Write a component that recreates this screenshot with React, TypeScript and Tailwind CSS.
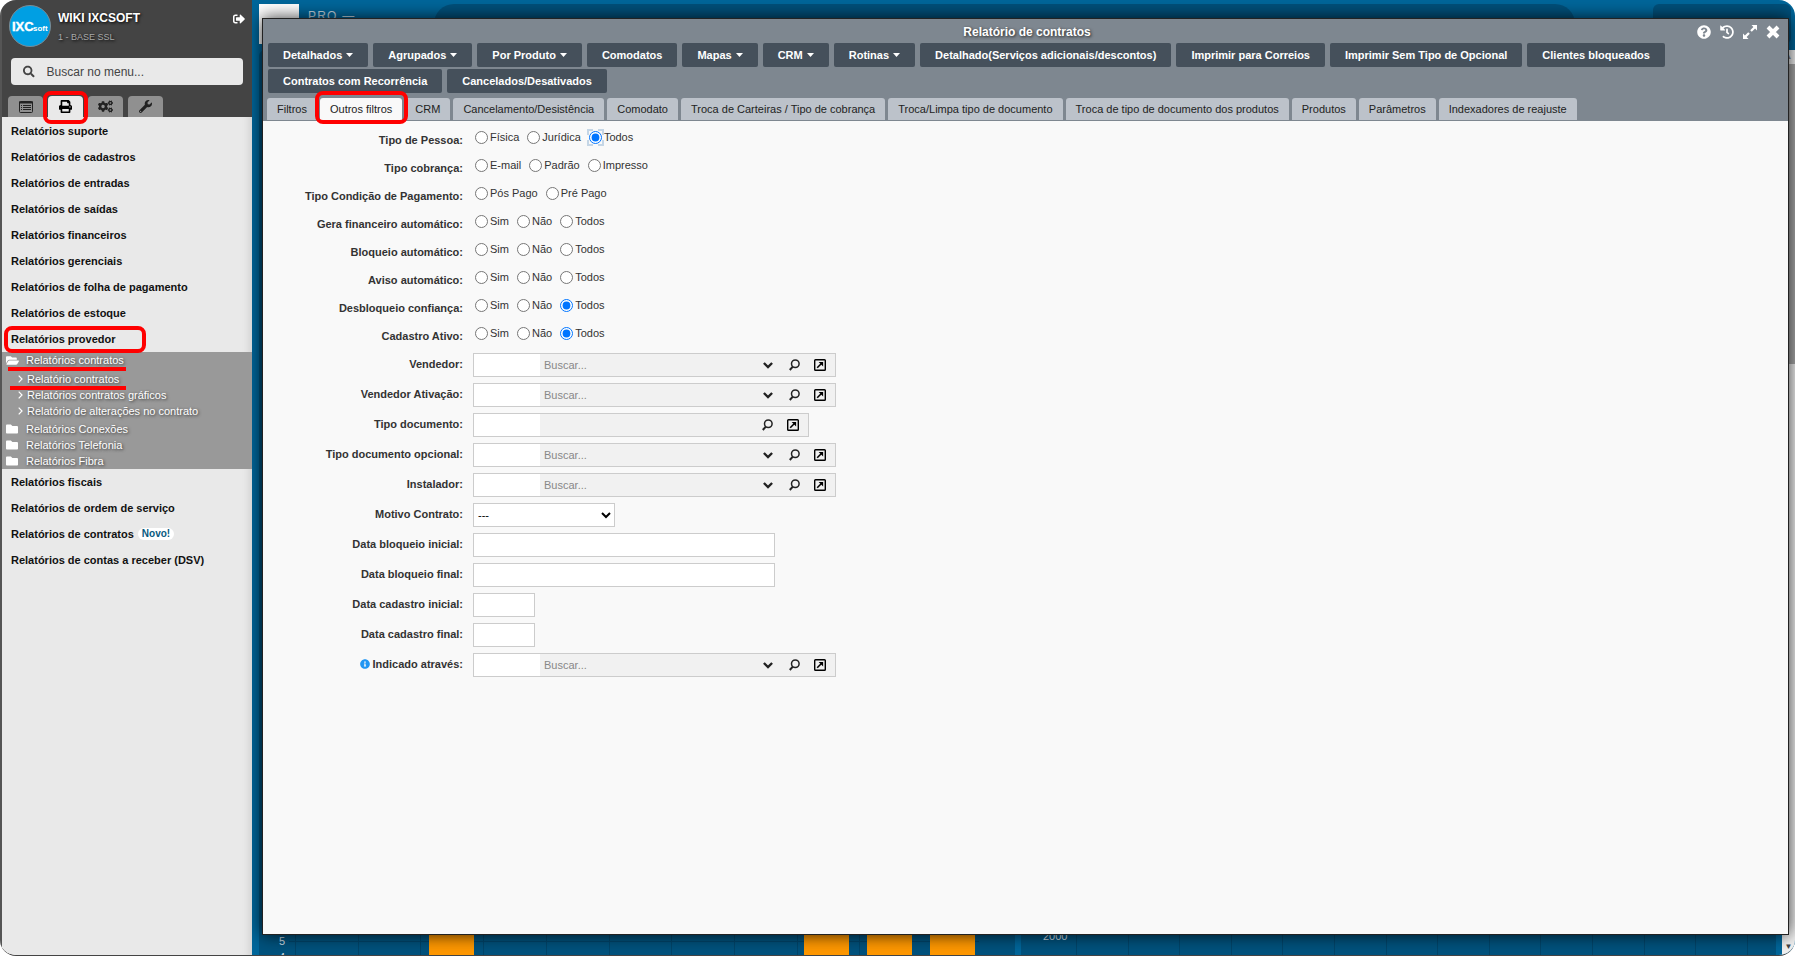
import { ReactNode } from 'react'
import {
  FaCogs,
  FaFolder,
  FaFolderOpen,
  FaHistory,
  FaInfoCircle,
  FaPrint,
  FaQuestionCircle,
  FaSearch,
  FaSignOutAlt,
  FaTimes,
  FaWrench,
} from 'react-icons/fa'

interface RadioField {
  label: string
  name: string
  options: string[]
  checked?: string
}

interface LookupField {
  label: string
  name: string
  searchable: boolean
  info?: boolean
}

const menuTop = [
  'Relatórios suporte',
  'Relatórios de cadastros',
  'Relatórios de entradas',
  'Relatórios de saídas',
  'Relatórios financeiros',
  'Relatórios gerenciais',
  'Relatórios de folha de pagamento',
  'Relatórios de estoque',
]

const contractReports = [
  'Relatório contratos',
  'Relatórios contratos gráficos',
  'Relatório de alterações no contrato',
]

const folders = ['Relatórios Conexões', 'Relatórios Telefonia', 'Relatórios Fibra']

const actions = [
  { label: 'Detalhados', menu: true },
  { label: 'Agrupados', menu: true },
  { label: 'Por Produto', menu: true },
  { label: 'Comodatos', menu: false },
  { label: 'Mapas', menu: true },
  { label: 'CRM', menu: true },
  { label: 'Rotinas', menu: true },
  { label: 'Detalhado(Serviços adicionais/descontos)', menu: false },
  { label: 'Imprimir para Correios', menu: false },
  { label: 'Imprimir Sem Tipo de Opcional', menu: false },
  { label: 'Clientes bloqueados', menu: false },
  { label: 'Contratos com Recorrência', menu: false },
  { label: 'Cancelados/Desativados', menu: false },
]

const tabs = [
  'Filtros',
  'Outros filtros',
  'CRM',
  'Cancelamento/Desistência',
  'Comodato',
  'Troca de Carteiras / Tipo de cobrança',
  'Troca/Limpa tipo de documento',
  'Troca de tipo de documento dos produtos',
  'Produtos',
  'Parâmetros',
  'Indexadores de reajuste',
]

const yesNoAll = ['Sim', 'Não', 'Todos']

const radioFields: RadioField[] = [
  { label: 'Tipo de Pessoa', name: 'tipo_pessoa', options: ['Física', 'Jurídica', 'Todos'], checked: 'Todos' },
  { label: 'Tipo cobrança', name: 'tipo_cobranca', options: ['E-mail', 'Padrão', 'Impresso'] },
  { label: 'Tipo Condição de Pagamento', name: 'tipo_condicao', options: ['Pós Pago', 'Pré Pago'] },
  { label: 'Gera financeiro automático', name: 'gera_financeiro', options: yesNoAll },
  { label: 'Bloqueio automático', name: 'bloqueio', options: yesNoAll },
  { label: 'Aviso automático', name: 'aviso', options: yesNoAll },
  { label: 'Desbloqueio confiança', name: 'desbloqueio', options: yesNoAll, checked: 'Todos' },
  { label: 'Cadastro Ativo', name: 'cadastro_ativo', options: yesNoAll, checked: 'Todos' },
]

const lookups: LookupField[] = [
  { label: 'Vendedor', name: 'vendedor', searchable: true },
  { label: 'Vendedor Ativação', name: 'vendedor_ativacao', searchable: true },
  { label: 'Tipo documento', name: 'tipo_documento', searchable: false },
  { label: 'Tipo documento opcional', name: 'tipo_documento_opcional', searchable: true },
  { label: 'Instalador', name: 'instalador', searchable: true },
]

const dates = [
  { label: 'Data bloqueio inicial', name: 'bloqueio_inicial', wide: true },
  { label: 'Data bloqueio final', name: 'bloqueio_final', wide: true },
  { label: 'Data cadastro inicial', name: 'cadastro_inicial', wide: false },
  { label: 'Data cadastro final', name: 'cadastro_final', wide: false },
]

function ListIcon() {
  return (
    <svg width="14" height="12" viewBox="0 0 14 12" fill="none" stroke="currentColor">
      <rect x="0.5" y="0.5" width="13" height="11" rx="1" />
      <path d="M0 1.5h14" strokeWidth="2" />
      <path d="M2 4.5h1M4 4.5h8M2 6.5h1M4 6.5h8M2 8.5h1M4 8.5h8" />
    </svg>
  )
}

function ResizeIcon() {
  return (
    <svg width="14" height="14" viewBox="0 0 14 14" fill="currentColor">
      <path d="M8.5 0H14v5.5l-1.9-1.9-3.3 3.2-1.6-1.6 3.2-3.3zM5.5 14H0V8.5l1.9 1.9 3.3-3.2 1.6 1.6-3.2 3.3z" />
    </svg>
  )
}

function CloseIcon() {
  return (
    <svg width="14" height="14" viewBox="0 0 14 14" fill="none" stroke="currentColor" strokeWidth="4">
      <path d="M2 2l10 10M12 2L2 12" />
    </svg>
  )
}

function ChevronIcon() {
  return (
    <svg width="10" height="7" viewBox="0 0 10 7" fill="none" stroke="currentColor" strokeWidth="2.4">
      <path d="M0.9 1l4.1 4 4.1-4" />
    </svg>
  )
}

function LensIcon() {
  return (
    <svg width="11" height="12" viewBox="0 0 11 12" fill="none" stroke="currentColor">
      <circle cx="6.3" cy="4.7" r="3.8" strokeWidth="1.5" />
      <path d="M3.6 7.8L0.8 11" strokeWidth="2" />
    </svg>
  )
}

function OpenIcon() {
  return (
    <svg width="12" height="12" viewBox="0 0 12 12" fill="none" stroke="currentColor">
      <rect x="0.7" y="0.7" width="10.6" height="10.6" rx="0.8" strokeWidth="1.4" />
      <path d="M3.2 8.8l4-4" strokeWidth="1.6" />
      <path d="M4.6 2.9h4.5v4.5z" fill="currentColor" stroke="none" />
    </svg>
  )
}

function MenuItem({ children }: { children: ReactNode }) {
  return (
    <a href="#" className="relative flex h-[26px] items-center px-[9px] font-bold text-[#111]">
      {children}
    </a>
  )
}

function Sidebar() {
  return (
    <aside className="flex w-[252px] shrink-0 flex-col border-l-2 border-[#555] bg-[#e9e9e9]">
      <div className="bg-[#444] text-white">
        <div className="flex h-[58px] items-start pl-[7px] pr-[7px] pt-[5px]">
          <div className="flex size-[42px] shrink-0 items-center justify-center rounded-full border border-[#7a8c96] bg-[#009fe3]">
            <svg width="36" height="14" viewBox="0 0 36 14" fill="#fff" className="font-bold">
              <text x="0" y="12" fontSize="13" stroke="#fff" strokeWidth="0.4">IXC</text>
              <text x="21" y="12" fontSize="8">soft</text>
            </svg>
          </div>
          <div className="flex-1 pl-[7px] pt-[5px]">
            <div className="text-[12px] font-bold leading-4 [text-shadow:1px_1px_3px_#000]">WIKI IXCSOFT</div>
            <div className="mt-[3px] text-[9px] leading-4 text-[#aaa] [text-shadow:1px_1px_3px_#000]">1 - BASE SSL</div>
          </div>
          <button aria-label="Sair" className="pt-2">
            <FaSignOutAlt size={12} />
          </button>
        </div>
        <label className="mx-[9px] flex h-[27px] items-center rounded bg-[#e9e9e9] pl-3 text-[#444]">
          <FaSearch size={13} />
          <input
            type="text"
            aria-label="Buscar no menu"
            placeholder="Buscar no menu..."
            className="ml-3 w-full text-[12px] outline-none placeholder:text-[#444]"
          />
        </label>
        <div className="mt-[11px] flex gap-[5px] pl-[6px] text-[#222]">
          <button aria-label="Listas" className="flex h-[21px] w-[35px] items-center justify-center rounded-t bg-[#909090]">
            <ListIcon />
          </button>
          <button aria-label="Relatórios" className="relative flex h-[21px] w-[35px] items-center justify-center rounded-t bg-[#e9e9e9] text-black">
            <FaPrint size={13} />
            <span className="absolute -bottom-[7px] -left-[5px] -right-[5px] -top-[5px] z-10 rounded-lg border-4 border-[#f00]" />
          </button>
          <button aria-label="Configurações" className="flex h-[21px] w-[35px] items-center justify-center rounded-t bg-[#909090]">
            <FaCogs size={15} />
          </button>
          <button aria-label="Ferramentas" className="flex h-[21px] w-[35px] items-center justify-center rounded-t bg-[#909090]">
            <FaWrench size={13} />
          </button>
        </div>
      </div>
      <nav className="flex-1 pt-px shadow-[inset_-10px_0_8px_-8px_rgba(0,0,0,0.12)]">
        {menuTop.map(item => (
          <MenuItem key={item}>{item}</MenuItem>
        ))}
        <MenuItem>
          Relatórios provedor
          <span className="absolute -bottom-px left-[2px] top-0 w-[142px] rounded-lg border-4 border-[#f00]" />
        </MenuItem>
        <div className="bg-[#999] leading-4 text-white [text-shadow:1px_1px_3px_#333]">
          <a href="#" className="relative flex h-4 items-center gap-[7px] pl-1">
            <FaFolderOpen size={13} />
            Relatórios contratos
            <span className="absolute -bottom-[3px] left-[6px] h-1 w-[118px] bg-[#f00]" />
          </a>
          <div className="pb-[2px] pt-[3px]">
            {contractReports.map((item, i) => (
              <a key={item} href="#" className="relative flex h-4 items-center gap-1 pl-4">
                <svg width="5" height="8" viewBox="0 0 5 8" fill="none" stroke="#fff" strokeWidth="1.2">
                  <path d="M0.7 0.7L4 4L0.7 7.3" />
                </svg>
                {item}
                {i === 0 && <span className="absolute -bottom-[3px] left-2 z-10 h-1 w-[116px] bg-[#f00]" />}
              </a>
            ))}
          </div>
          {folders.map(item => (
            <a key={item} href="#" className="flex h-4 items-center gap-2 pl-1">
              <FaFolder size={12} />
              {item}
            </a>
          ))}
        </div>
        <MenuItem>Relatórios fiscais</MenuItem>
        <MenuItem>Relatórios de ordem de serviço</MenuItem>
        <MenuItem>
          Relatórios de contratos
          <span className="ml-1 rounded-full bg-white px-1 text-[10px] leading-3 text-[#0a5a80]">Novo!</span>
        </MenuItem>
        <MenuItem>Relatórios de contas a receber (DSV)</MenuItem>
      </nav>
    </aside>
  )
}

// Visible strip of the orders chart behind the window
function OrdersChart() {
  const grid = Array.from({ length: 10 }, (_, i) => 36 + Math.round(i * 62.7))
  return (
    <svg width="720" height="22" className="mt-auto">
      <g stroke="#00456a">
        {grid.map(x => (
          <path key={x} d={`M${x}.5 0V22`} />
        ))}
        <path d="M30 8.5H725" />
      </g>
      <g fill="#ff9800">
        {[170, 545, 608, 671].map(x => (
          <rect key={x} x={x} y="0" width="45" height="22" />
        ))}
      </g>
      <g fill="#d0dde5" fontSize="11">
        <text x="20" y="12">5</text>
        <text x="20" y="28">4</text>
      </g>
    </svg>
  )
}

function RevenueChart() {
  const grid = Array.from({ length: 14 }, (_, i) => 55 + Math.round(i * 51.6))
  return (
    <svg width="740" height="22" className="mt-auto">
      {grid.map(x => (
        <path key={x} d={`M${x}.5 0V22`} stroke="#00456a" />
      ))}
      <text x="22" y="7" fill="#d0dde5" fontSize="11">2000</text>
    </svg>
  )
}

function Dashboard() {
  return (
    <div className="flex flex-1 flex-col bg-[#00669a]">
      <header className="flex h-[50px] pl-[7px] pt-1">
        <div className="size-10 bg-white" />
        <div className="w-[135px] pl-[9px] pt-1 text-[12px] tracking-widest text-[#c4d6e0]">PRO —</div>
        <div className="h-10 flex-1 rounded-full bg-[#00507b]" />
        <div className="ml-[78px] mr-1 h-10 w-[138px] rounded-md bg-[#00507b]" />
      </header>
      <div className="flex flex-1">
        <div className="flex flex-1 gap-[6px] px-[7px] pr-[6px]">
          <div className="flex flex-1 flex-col rounded-t-md bg-[#00527d]">
            <OrdersChart />
          </div>
          <div className="flex flex-1 flex-col rounded-t-md bg-[#00527d]">
            <RevenueChart />
          </div>
        </div>
        <div className="flex w-[13px] flex-col items-center bg-[#f1f1f1]">
          <span className="flex h-[14px] items-center text-[8px] text-[#888]">▲</span>
          <span className="h-[300px] w-full bg-[#a8a8a8]" />
          <span className="mt-auto flex h-4 items-center text-[8px] text-[#444]">▼</span>
        </div>
      </div>
    </div>
  )
}

function FieldRow({ label, htmlFor, info, children }: { label: string; htmlFor: string; info?: boolean; children: ReactNode }) {
  return (
    <div className="flex h-[30px] items-center gap-[10px]">
      <label htmlFor={htmlFor} className="flex w-[200px] items-center justify-end gap-[3px] pb-[2px] font-bold">
        {info && <FaInfoCircle size={10} className="text-[#2196f3]" />}
        {label}:
      </label>
      {children}
    </div>
  )
}

function Lookup({ field }: { field: LookupField }) {
  return (
    <FieldRow label={field.label} htmlFor={field.name} info={field.info}>
      <div className="flex h-6 border border-[#ccc] bg-[#f1f1f1] text-[#222]">
        <input id={field.name} type="text" className="w-[66px] bg-white px-1 outline-none" />
        <input
          type="text"
          aria-label={`${field.label}: busca`}
          placeholder={field.searchable ? 'Buscar...' : ''}
          className="w-[214px] px-1 outline-none placeholder:text-[#888]"
        />
        {field.searchable && (
          <button type="button" aria-label="Listar" className="flex w-[27px] items-center justify-center">
            <ChevronIcon />
          </button>
        )}
        <button type="button" aria-label="Pesquisar" className="flex w-[27px] items-center justify-center">
          <LensIcon />
        </button>
        <button type="button" aria-label="Abrir cadastro" className="flex w-[27px] items-center pl-[6px] text-black">
          <OpenIcon />
        </button>
      </div>
    </FieldRow>
  )
}

function FiltersForm() {
  return (
    <form className="flex-1 bg-[#f9f9f9] pt-[2px] text-[#333]">
      {radioFields.map((field, i) => (
        <div
          key={field.name}
          role="radiogroup"
          aria-labelledby={`${field.name}_label`}
          className="flex h-7 items-center gap-3"
        >
          <span id={`${field.name}_label`} className="w-[200px] pt-[5px] text-right font-bold">
            {field.label}:
          </span>
          <div className="flex items-center gap-2">
            {field.options.map(option => (
              <label key={option} className="flex items-center gap-[2px]">
                <input
                  type="radio"
                  name={field.name}
                  defaultChecked={field.checked === option}
                  className={
                    i === 0 && field.checked === option
                      ? 'size-[13px] outline-2 outline-dashed outline-[#c5d6e6]'
                      : 'size-[13px]'
                  }
                />
                {option}
              </label>
            ))}
          </div>
        </div>
      ))}
      <div className="pt-[3px]">
        {lookups.map(field => (
          <Lookup key={field.name} field={field} />
        ))}
        <FieldRow label="Motivo Contrato" htmlFor="motivo">
          <select id="motivo" className="h-6 w-[142px] border border-[#ccc] bg-white text-black">
            <option>---</option>
          </select>
        </FieldRow>
        {dates.map(field => (
          <FieldRow key={field.name} label={field.label} htmlFor={field.name}>
            <input
              id={field.name}
              type="text"
              className={`h-6 border border-[#ccc] bg-white px-1 ${field.wide ? 'w-[302px]' : 'w-[62px]'}`}
            />
          </FieldRow>
        ))}
        <Lookup field={{ label: 'Indicado através', name: 'indicado', searchable: true, info: true }} />
      </div>
    </form>
  )
}

function ReportWindow() {
  return (
    <section className="absolute bottom-5 left-[10px] right-[6px] top-[18px] flex flex-col border border-[#222] bg-[#7e8790] shadow-[0_0_16px_rgba(0,0,0,0.8)]">
      <div className="flex h-6 shrink-0 items-center pr-2 pt-[2px]">
        <h1 className="flex-1 pl-[94px] text-center text-[12px] font-bold text-white [text-shadow:1px_1px_3px_#222]">
          Relatório de contratos
        </h1>
        <div className="flex gap-[9px] text-white">
          <button aria-label="Ajuda"><FaQuestionCircle size={14} /></button>
          <button aria-label="Histórico"><FaHistory size={14} /></button>
          <button aria-label="Maximizar"><ResizeIcon /></button>
          <button aria-label="Fechar"><CloseIcon /></button>
        </div>
      </div>
      <div className="flex flex-wrap gap-x-[5px] gap-y-[2px] px-[5px]">
        {actions.map(action => (
          <button
            key={action.label}
            className="flex h-6 items-center gap-1 rounded-xs bg-[#45505b] px-[15px] font-bold text-white"
          >
            {action.label}
            {action.menu && (
              <svg width="7" height="4" viewBox="0 0 7 4" fill="#fff">
                <path d="M0 0h7L3.5 4z" />
              </svg>
            )}
          </button>
        ))}
      </div>
      <div className="mt-[5px] flex gap-[3px] border-b border-[#7e8790] pl-1">
        {tabs.map(tab => (
          <button
            key={tab}
            className={`relative h-[22px] rounded-t-[3px] px-[10px] text-[#222] ${
              tab === 'Outros filtros' ? 'bg-[#f9f9f9]' : 'bg-[#bcc2ca]'
            }`}
          >
            {tab}
            {tab === 'Outros filtros' && (
              <span className="absolute -bottom-1 -left-[5px] -right-[6px] -top-[7px] z-10 rounded-lg border-4 border-[#f00]" />
            )}
          </button>
        ))}
      </div>
      <FiltersForm />
    </section>
  )
}

export default function App() {
  return (
    <div className="bg-white font-['Liberation_Sans',Arial,sans-serif] text-[11px] leading-4">
      <div className="flex min-h-screen overflow-hidden rounded-2xl border-b border-[#444]">
        <Sidebar />
        <main className="relative flex flex-1 flex-col overflow-hidden">
          <Dashboard />
          <ReportWindow />
        </main>
      </div>
    </div>
  )
}
